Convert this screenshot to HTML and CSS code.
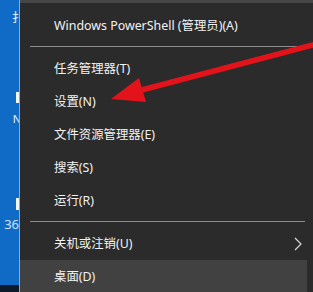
FILE: index.html
```html
<!DOCTYPE html>
<html lang="zh-CN">
<head>
    <meta charset="UTF-8">
    <title>开始菜单右键</title>
    <link rel="stylesheet" href="styles.css">
</head>
<body>
    <div class="screen">
        <div class="taskbar">
            <span class="mark mark-top">扌</span>
            <span class="mark mark-bar bar-1"></span>
            <span class="mark mark-n">N</span>
            <span class="mark mark-bar bar-2"></span>
            <span class="mark mark-num">36</span>
            <div class="taskbar-foot"></div>
        </div>
        <div class="menu">
            <div class="item">Windows PowerShell (管理员)(A)</div>
            <div class="sep"></div>
            <div class="item">任务管理器(T)</div>
            <div class="item">设置(N)</div>
            <div class="item">文件资源管理器(E)</div>
            <div class="item">搜索(S)</div>
            <div class="item">运行(R)</div>
            <div class="sep"></div>
            <div class="item has-sub">关机或注销(U)
                <svg class="chevron" width="8" height="14" viewBox="0 0 8 14"><path d="M1 1 L7 7 L1 13" fill="none" stroke="#d8d8d8" stroke-width="1.2"/></svg>
            </div>
            <div class="item active">桌面(D)</div>
        </div>
    </div>

    <!-- red arrow pointing at 设置 -->
    <svg class="arrow" width="313" height="292" viewBox="0 0 313 292">
        <line x1="316" y1="44" x2="138" y2="91" stroke="#e3131b" stroke-width="5.5"/>
        <polygon points="111,99 139,78 146,102" fill="#e3131b"/>
    </svg>
</body>
</html>
```

FILE: styles.css
```css
body {
    margin: 0;
    background: #2b2b2b;
    font-family: "Noto Sans", "Noto Sans CJK SC", sans-serif;
    overflow: hidden;
}
.screen {
    display: flex;
    width: 313px;
    height: 292px;
}
.taskbar {
    width: 19px;
    flex-shrink: 0;
    background: #0f6bc6;
    border-right: 1px solid #78b0e6;
    display: flex;
    flex-direction: column;
    align-items: flex-end;
    overflow: hidden;
    color: #e8f2fc;
}
.mark {
    display: block;
    font-size: 12px;
    line-height: 12px;
}
.mark-top {
    margin-top: 12px;
    margin-right: -5px;
}
.mark-bar {
    width: 3px;
    background: #eef5fd;
}
.bar-1 {
    margin-top: 68px;
    height: 11px;
}
.mark-n {
    margin-top: 10px;
    margin-right: -2px;
    font-size: 11px;
}
.bar-2 {
    margin-top: 73px;
    height: 12px;
}
.mark-num {
    margin-top: 8px;
    font-size: 13px;
    color: #cfe3f6;
    margin-right: 0;
}
.taskbar-foot {
    margin-top: auto;
    align-self: stretch;
    height: 7px;
    background: #0c1a2b;
}
.menu {
    flex: 1;
    border-top: 3px solid #474747;
    padding-top: 6px;
    color: #f2f2f2;
    font-size: 12.4px;
}
.item {
    height: 33px;
    line-height: 33px;
    padding-left: 34px;
    display: flex;
    align-items: center;
    white-space: nowrap;
}
.sep {
    height: 1px;
    background: #8c8c8c;
    margin: 4px 8px 5px 10px;
}
.has-sub {
    justify-content: space-between;
    padding-right: 11px;
}
.active {
    background: #414141;
    margin-right: 6px;
}
.arrow {
    position: absolute;
    left: 0;
    top: 0;
    pointer-events: none;
}
```
